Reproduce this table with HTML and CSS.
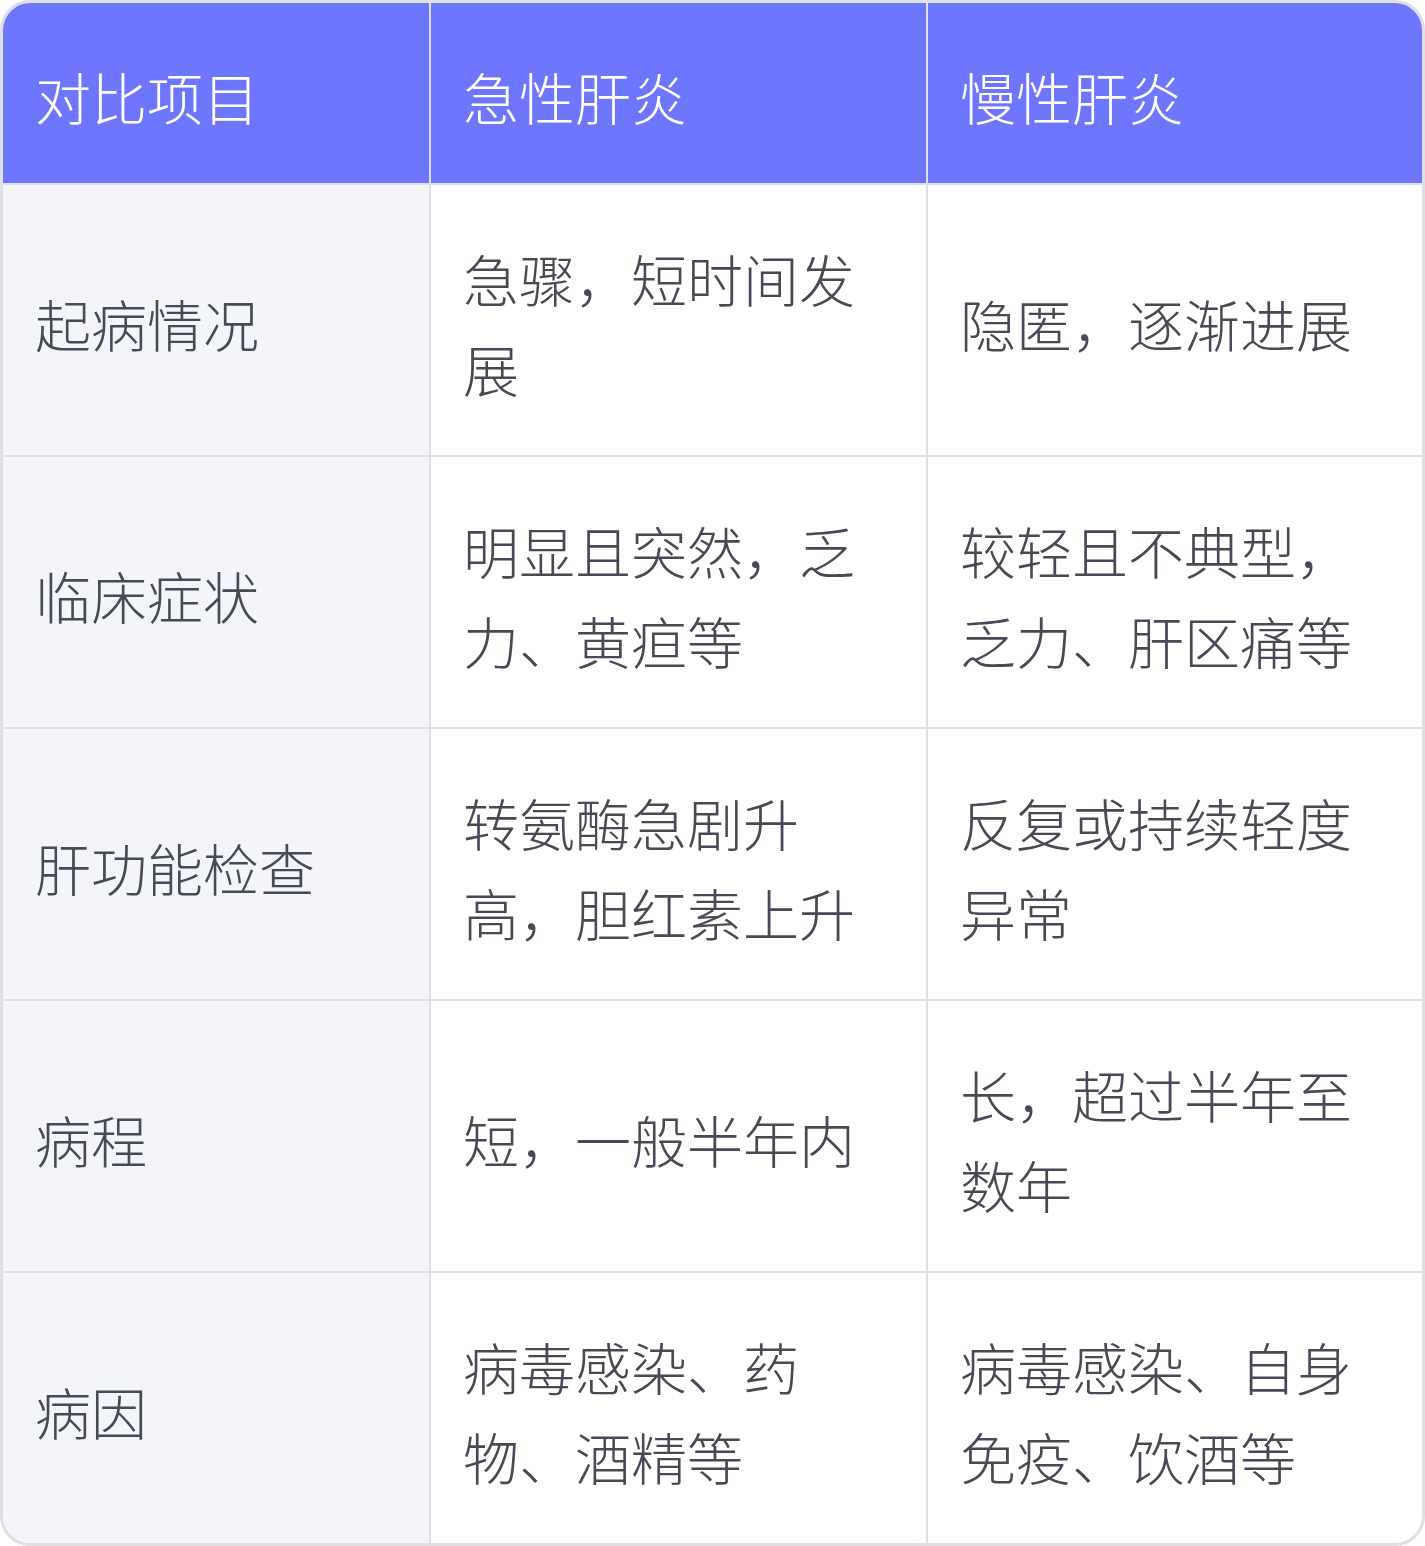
FILE: index.html
```html
<!DOCTYPE html>
<html lang="zh-CN">
<head>
<meta charset="utf-8">
<title>急性肝炎与慢性肝炎对比</title>
<link rel="stylesheet" href="styles.css">
</head>
<body>
<div class="wrap">
<table class="cmp">
  <colgroup>
    <col class="c1"><col class="c2"><col class="c3">
  </colgroup>
  <thead>
    <tr><th>对比项目</th><th>急性肝炎</th><th class="last">慢性肝炎</th></tr>
  </thead>
  <tbody>
    <tr><td class="key">起病情况</td><td>急骤，短时间发展</td><td class="last">隐匿，逐渐进展</td></tr>
    <tr><td class="key">临床症状</td><td>明显且突然，乏力、黄疸等</td><td class="last">较轻且不典型，乏力、肝区痛等</td></tr>
    <tr><td class="key">肝功能检查</td><td>转氨酶急剧升高，胆红素上升</td><td class="last">反复或持续轻度异常</td></tr>
    <tr><td class="key">病程</td><td>短，一般半年内</td><td class="last">长，超过半年至数年</td></tr>
    <tr class="end"><td class="key">病因</td><td>病毒感染、药物、酒精等</td><td class="last">病毒感染、自身免疫、饮酒等</td></tr>
  </tbody>
</table>
</div>
</body>
</html>
```
FILE: styles.css
```css
html, body {
  margin: 0;
  padding: 0;
  background: #ffffff;
}
.wrap {
  width: 1425px;
  height: 1546px;
  box-sizing: border-box;
  border: 3px solid #dfe0e6;
  border-radius: 30px;
  overflow: hidden;
}
.cmp {
  width: 1419px;
  border-collapse: separate;
  border-spacing: 0;
  table-layout: fixed;
  font-family: "Noto Sans CJK SC", "Noto Sans", sans-serif;
  font-weight: 300;
  font-size: 56px;
  line-height: 90px;
}
.c1 { width: 428px; }
.c2 { width: 497px; }
.c3 { width: 494px; }
.cmp th, .cmp td {
  text-align: left;
  vertical-align: middle;
  padding: 48px 32px 42px 32px;
  border-right: 2px solid #dfe0e6;
  border-bottom: 2px solid #dfe0e6;
}
.cmp th.last, .cmp td.last { border-right: 0; }
.cmp tr.end td { border-bottom: 0; }
.cmp th {
  background: #6f76fe;
  color: #ffffff;
  font-weight: 300;
  height: 90px;
}
.cmp td {
  color: #474a56;
  height: 180px;
}
.cmp td.key {
  background: #f4f5f9;
}
```
